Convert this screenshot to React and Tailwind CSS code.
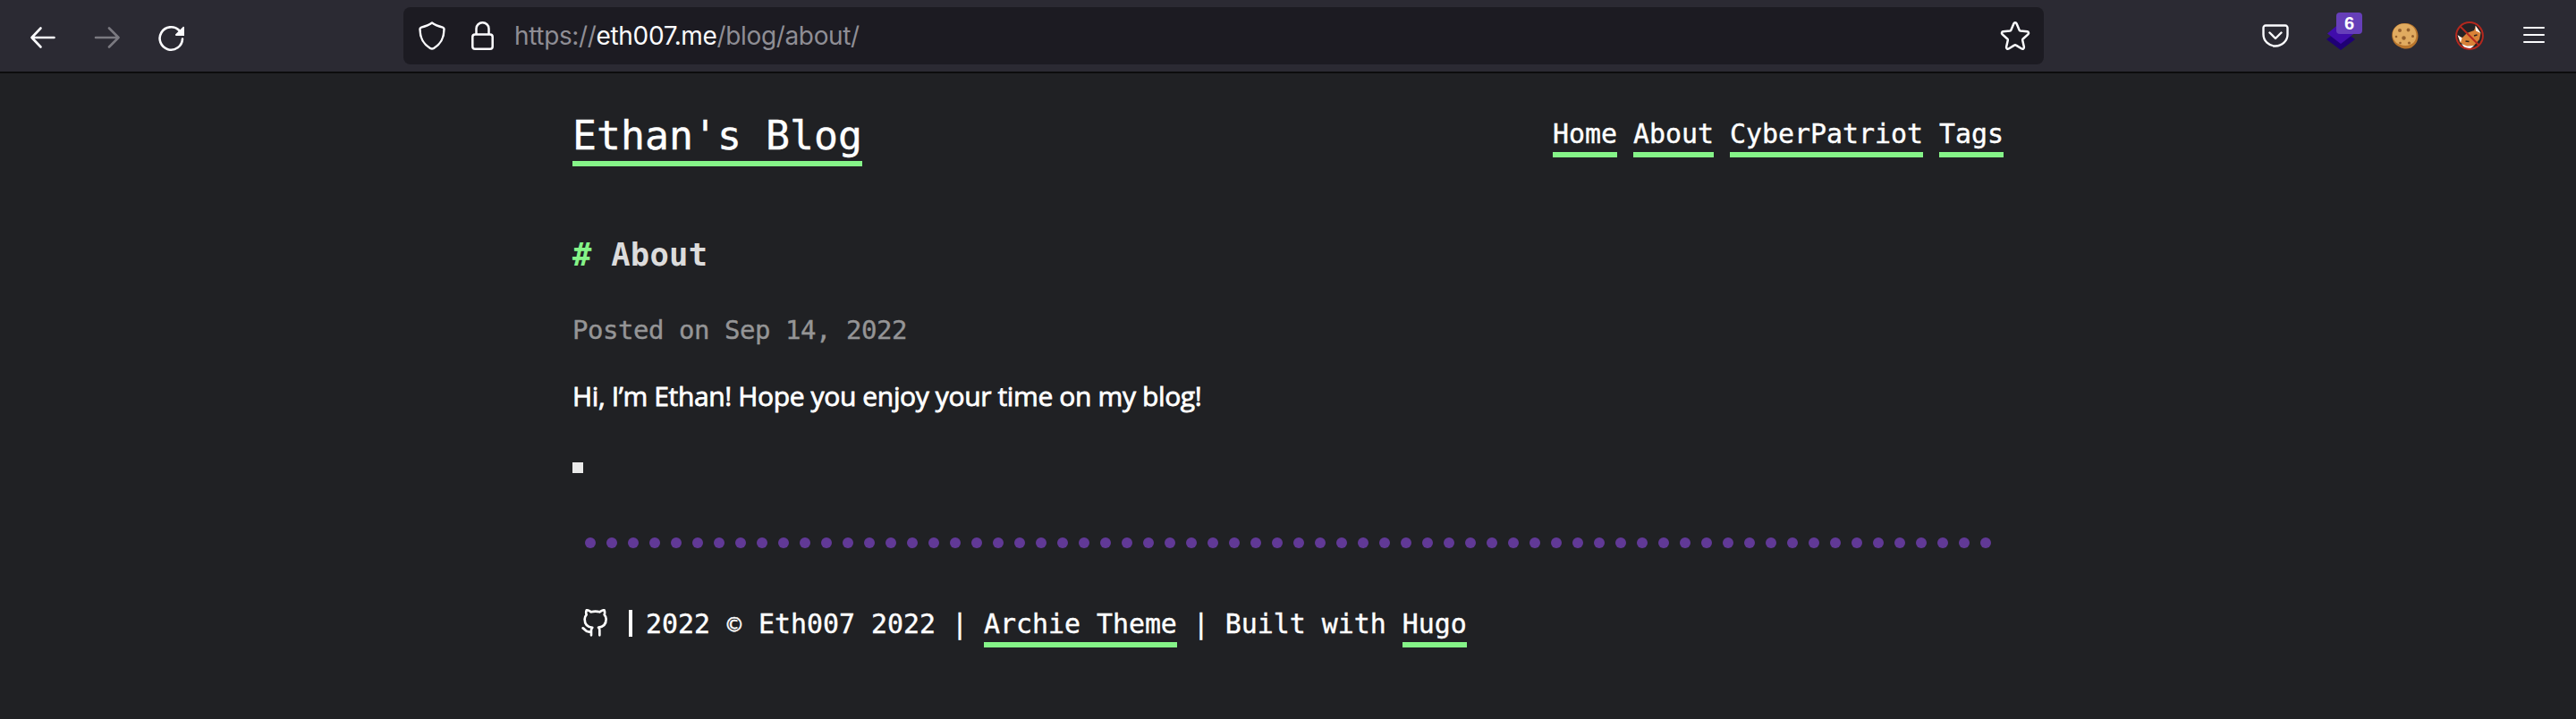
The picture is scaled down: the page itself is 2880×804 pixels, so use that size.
import React from "react";

const MONO = "font-['DejaVu_Sans_Mono',monospace]";
const LINK = "inline-block border-b-6 border-[#85f488]";

function Extensions() {
  return (
    <div className="flex items-center text-[#fbfbfe]">
      <svg className="mr-[42px] block h-[26px] w-[30px]" viewBox="0 0 30 26" fill="none" stroke="currentColor" strokeWidth="2.4" strokeLinecap="round" strokeLinejoin="round">
        <path d="M4 1.500h22a2.500 2.500 0 0 1 2.500 2.500v7.500a13.500 13 0 0 1-27 0V4A2.500 2.500 0 0 1 4 1.500z" />
        <path d="M8.500 9.500l6.500 6.500 6.500-6.500" />
      </svg>
      <div className="relative mr-[40px] h-[32px] w-[32px]">
        <svg className="block h-8 w-8" viewBox="0 0 32 32">
          <path d="M0 20 16 8l16 12-16 12z" fill="#1f0075" />
          <path d="M1 13.500 16 1l15 12.500L16 25z" fill="#400cab" />
        </svg>
        <div className="absolute -top-[10px] left-[11px] flex h-[24px] w-[29px] items-center justify-center rounded-[4px] bg-[#663fb9] font-['Liberation_Sans',sans-serif] text-[20px] leading-none font-bold text-white">6</div>
      </div>
      <svg className="mr-[40px] block h-8 w-[32px]" viewBox="0 0 32 32">
        <path d="M15 2C24 1 30.500 8 30.500 16c0 7-4 11-8 13.500-4 1.500-9 1.500-12.500-1C4 26 1.200 21 1.200 15.500 1.200 8 7 2 15 2z" fill="#b8752c" />
        <path d="M14.500 2.500C23 2 28.500 8 28.500 15.500c0 6.500-4.500 11.500-12 11.500C8 27 2 22 2 15S7 2.800 14.500 2.500z" fill="#e0ab60" />
        <g fill="#94602d">
          <circle cx="10" cy="10" r="2" /><circle cx="19.500" cy="9.500" r="1.900" /><circle cx="6" cy="17" r="1.300" />
          <circle cx="14.500" cy="18.500" r="2.200" /><circle cx="24.500" cy="16.500" r="1.500" /><circle cx="10.500" cy="24" r="1.300" /><circle cx="20.500" cy="24" r="1.600" />
        </g>
      </svg>
      <svg className="mr-[44px] block h-8 w-8" viewBox="0 0 32 32">
        <circle cx="16" cy="16" r="14.800" fill="#252225" />
        <path d="M23 5 28.500 13 27 20l-6 7-9 1-7-5-2-7 5 2 5-5 8-3z" fill="#d98238" />
        <path d="M22.500 4.500 28.500 13l-5.500-2.500zM2.500 15l5 3.500-1.500 5zM7 25l6 2.500 8-.5-4 3.500H11z" fill="#fff" />
        <path d="M11.500 22l4 .5M21 16l3.500-1" stroke="#2a2220" strokeWidth="1.500" />
        <circle cx="16" cy="16" r="14.900" fill="none" stroke="#b5281e" strokeWidth="2" />
        <path d="M5.500 5.500l21 21" stroke="#b5281e" strokeWidth="2" />
      </svg>
      <div className="-mt-[2px] flex w-6 flex-col gap-[6px]">
        <div className="h-[2px] rounded-full bg-current" />
        <div className="h-[2px] rounded-full bg-current" />
        <div className="h-[2px] rounded-full bg-current" />
      </div>
    </div>
  );
}

function Toolbar() {
  return (
    <div className="flex h-[82px] items-start border-b-2 border-[#0c0c0d] bg-[#2b2a33] text-[#fbfbfe]">
      <div className="flex w-[451px] shrink-0 items-center pt-[26px] pl-[32px]">
        <svg className="mr-[42px] block h-[30px] w-[30px]" viewBox="0 0 30 30" fill="none" stroke="currentColor" strokeWidth="2.600" strokeLinecap="round" strokeLinejoin="round">
          <path d="M28.500 15H3.500M13.500 4.500 3.500 15l10 10.500" />
        </svg>
        <svg className="mr-[42px] block h-[30px] w-[30px] text-[#7a7980]" viewBox="0 0 30 30" fill="none" stroke="currentColor" strokeWidth="2.600" strokeLinecap="round" strokeLinejoin="round">
          <path d="M3 15h25.500M18 4.500 28.500 15 18 25.500" />
        </svg>
        <svg className="mt-[2px] block h-[30px] w-[30px]" viewBox="0 0 30 30" fill="none" stroke="currentColor" strokeWidth="2.600" strokeLinecap="round">
          <path d="M28 15.500A12.700 12.700 0 1 1 24.300 6" />
          <path d="M30 2.700v9.200h-9c-1 0-1.400-1-.7-1.600l8.100-8.100c.6-.6 1.600-.4 1.600.5z" fill="currentColor" stroke="none" />
        </svg>
      </div>
      <div className="mt-2 flex h-16 w-[1834px] shrink-0 items-center rounded-[8px] bg-[#1c1b22] pr-[15px] pl-[16px]">
        <svg className="mr-[28px] block h-8 w-[32px]" viewBox="0 0 32 32" fill="none" stroke="currentColor" strokeWidth="2.500" strokeLinejoin="round">
          <path d="M16 1.500C12.500 4 7 5.800 4 6.600c-1 .3-1.500 1-1.500 2C2.600 19 6 25 14 30c1.500.9 2.500.9 4 0C26 25 29.400 19 29.500 8.600c0-1-.5-1.700-1.500-2C25 5.800 19.500 4 16 1.500z" />
        </svg>
        <svg className="mr-[23px] block h-8 w-[25px]" viewBox="0 0 25 32" fill="none" stroke="currentColor" strokeWidth="2.500">
          <rect x="1.300" y="14.500" width="22.400" height="16.200" rx="2.800" />
          <path d="M5.500 14.500V8a7 6.700 0 0 1 14 0v6.500" />
        </svg>
        <div className="flex-1 font-[Inter,sans-serif] text-[28px] leading-[40px] tracking-[-0.35px] text-[#8f8e95]">
          https://<span className="text-[#fbfbfe]">eth007.me</span>/blog/about/
        </div>
        <svg className="block h-[34px] w-[34px]" viewBox="0 0 34 34" fill="none" stroke="currentColor" strokeWidth="2.500" strokeLinejoin="round">
          <path d="M15.500 3.200c.6-1.400 2.400-1.400 3 0l3.200 7.500c.2.500.7.800 1.200.9l7.500.7c1.600.2 2.200 1.900 1 3l-5.700 5.200c-.4.400-.6.900-.5 1.500l1.700 7.600c.3 1.600-1.300 2.700-2.600 1.900L18 27.600c-.6-.4-1.400-.4-2 0l-6.300 3.900c-1.300.8-2.900-.3-2.600-1.900L8.800 22c.1-.6-.1-1.100-.5-1.500l-5.700-5.200c-1.200-1.100-.6-2.800 1-3l7.500-.7c.5-.1 1-.4 1.200-.9z" />
        </svg>
      </div>
      <div className="flex h-20 items-center pl-[244px]"><Extensions /></div>
    </div>
  );
}

export default function App() {
  return (
    <div className="h-[804px] w-[2880px] overflow-hidden bg-[#202124]">
      <Toolbar />
      <main className={`mx-auto w-[1600px] text-[29.9px] leading-[40px] tracking-[0px] text-white [-webkit-text-stroke:0.4px] ${MONO}`}>
        <header className="flex items-start justify-between pt-[44px]">
          <a className={`${LINK} h-[60px] text-[44.8px] leading-[52px] tracking-[0.03px]`}>Ethan's Blog</a>
          <nav className="flex gap-[18px] pt-[4px]">
            <a className={`${LINK} h-[46px]`}>Home</a>
            <a className={`${LINK} h-[46px]`}>About</a>
            <a className={`${LINK} h-[46px]`}>CyberPatriot</a>
            <a className={`${LINK} h-[46px]`}>Tags</a>
          </nav>
        </header>
        <h1 className="mt-[75px] text-[35.5px] leading-[48px] font-bold tracking-[0.25px] text-[#dcdcdc] [-webkit-text-stroke:0px]">
          <span className="text-[#85f488]">#</span> About
        </h1>
        <div className="mt-[40px] text-[29px] tracking-[-0.46px] text-[#959596]">Posted on Sep 14, 2022</div>
        <p className="mt-[34px] font-['Open_Sans',sans-serif] text-[30px] font-medium tracking-[-0.37px] whitespace-nowrap [-webkit-text-stroke:0.8px]">Hi, I’m Ethan! Hope you enjoy your time on my blog!</p>
        <div className="mt-[54px] h-3 w-3 bg-[#eaeaea]" />
        <div className="mt-[72px] flex gap-3 pl-[14px]">
          {Array.from({ length: 66 }, (_, i) => (
            <div key={i} className="h-3 w-3 shrink-0 rounded-full bg-[#613996]" />
          ))}
        </div>
        <footer className="flex items-start pt-[65px] pl-[9px]">
          <svg className="mt-[3px] block h-[32px] w-[32px]" viewBox="0 0 24 24" fill="none" stroke="currentColor" strokeWidth="2" strokeLinecap="round" strokeLinejoin="round">
            <path d="M9 19c-5 1.500-5-2.500-7-3m14 6v-3.870a3.370 3.370 0 0 0-.94-2.610c3.140-.35 6.440-1.540 6.440-7A5.440 5.440 0 0 0 20 4.770 5.070 5.070 0 0 0 19.910 1S18.730.65 16 2.480a13.380 13.380 0 0 0-7 0C6.270.65 5.090 1 5.090 1A5.070 5.070 0 0 0 5 4.770a5.440 5.440 0 0 0-1.500 3.780c0 5.420 3.300 6.610 6.440 7A3.370 3.370 0 0 0 9 18.130V22" />
          </svg>
          <div className="mt-[4px] mr-[15px] ml-[22px] h-[30px] w-[4px] bg-white" />
          <div className="whitespace-pre">2022 <span className="inline-block w-[18px] text-center text-[27px]">©</span> Eth007 2022 | <a className={`${LINK} h-[46px]`}>Archie Theme</a> | Built with <a className={`${LINK} h-[46px]`}>Hugo</a></div>
        </footer>
      </main>
    </div>
  );
}
